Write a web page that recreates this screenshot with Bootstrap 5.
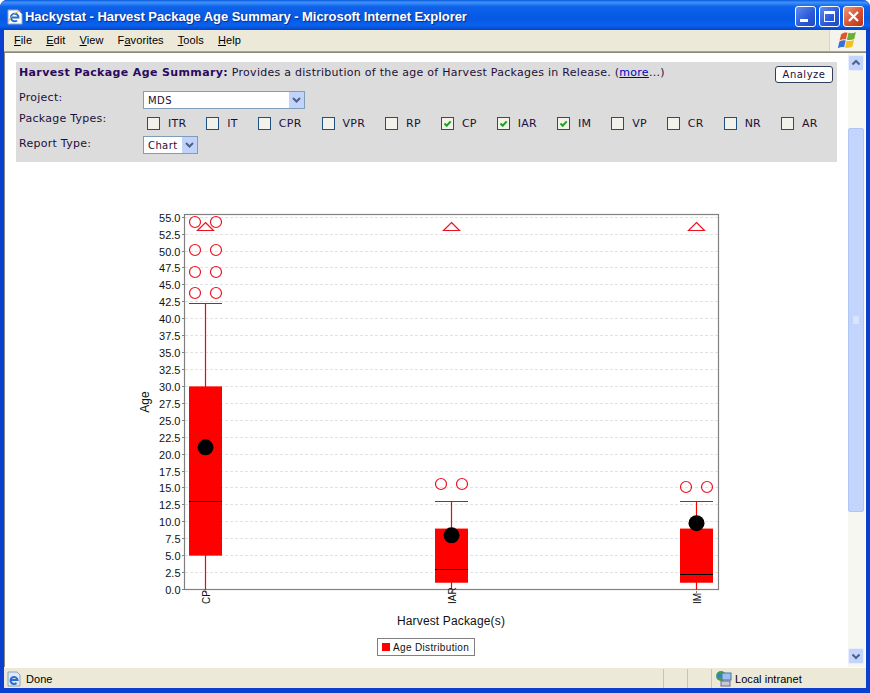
<!DOCTYPE html>
<html lang="en">
<head>
  <meta charset="UTF-8" />
  <title>Hackystat - Harvest Package Age Summary - Microsoft Internet Explorer</title>
  <link href="https://cdn.jsdelivr.net/npm/bootstrap@5.3.0/dist/css/bootstrap.min.css" rel="stylesheet" />
  <script src="https://cdn.jsdelivr.net/npm/bootstrap@5.3.0/dist/js/bootstrap.bundle.min.js"></script>
  <style>
    html, body { height: 100%; margin: 0; background: #fff; overflow: hidden; }
    .xp-window { width: 870px; height: 693px; background: #0a3fd0; border-radius: 7px 7px 0 0; padding: 0 4px 5px 4px; }
    .xp-title {
      height: 30px; margin: 0 -4px; padding: 3px 6px 0 7px; border-radius: 7px 7px 0 0;
      background: linear-gradient(180deg, #0a5be0 0%, #3f92fb 8%, #0f63ea 22%, #0458e4 60%, #0a62ee 85%, #0345c8 100%);
      color: #fff; font: bold 13px "Liberation Sans", sans-serif; text-shadow: 1px 1px 1px #0a2c90;
    }
    .xp-title-text { margin-left: 2px; letter-spacing: -.05px; }
    .xp-wbtn { width: 21px; height: 21px; border: 1px solid #fff; border-radius: 3px; margin-left: 3px; background: linear-gradient(135deg, #5f8df0, #2a58d8 60%, #2049c0); display: block; }
    .xp-wbtn-close { background: linear-gradient(135deg, #ef9a7c, #d8512f 55%, #b8341a); }
    .xp-menu { height: 22px; padding: 0 0 2px 10px; gap: 14px; background: #ece9d8; border-bottom: 1px solid #a9a797; font: 11px "Liberation Sans", sans-serif; letter-spacing: .1px; color: #000; }
    .xp-flag { width: 37px; height: 21px; margin-bottom: -2px; background: #f4f3ec; border-left: 1px solid #d8d5c4; }
    .xp-main { height: 615px; background: #fff; border-top: 1px solid #8a8878; border-left: 1px solid #8a8878; }
    .xp-page { width: 843px; padding: 9px 0 0 11px; }
    .age-panel { width: 821px; height: 100px; padding: 4px 4px 0 3px; background: #dcdcdc; color: #1c1038; font: 11px "DejaVu Sans", Verdana, sans-serif; letter-spacing: .27px; }
    .age-head { height: 25px; }
    .age-head b { color: #2a0a5e; letter-spacing: .37px; }
    .age-head a { color: #0000c0; }
    .age-analyze { width: 58px; height: 17px; padding: 0; background: #fff; border: 1px solid #30405c; border-radius: 3px; font: 10px "DejaVu Sans", sans-serif; letter-spacing: .5px; color: #1c1038; }
    .age-row { display: flex; }
    .age-label { width: 124px; flex: none; }
    .age-label-report { padding-top: 1px; }
    .age-select { height: 18px; padding: 0 0 0 4px; border: 1px solid #7f9db9; border-radius: 0; font: 10px "DejaVu Sans", sans-serif; letter-spacing: .4px; color: #1c1038; background-color: #fff; background-size: 15px 16px; background-position: right 0 center;
      background-image: url("data:image/svg+xml,%3Csvg xmlns='http://www.w3.org/2000/svg' viewBox='0 0 15 16'%3E%3Crect width='15' height='16' fill='%23c1d3fb'/%3E%3Cpath d='M4 6l3.5 3.5L11 6' fill='none' stroke='%234d6185' stroke-width='2'/%3E%3C/svg%3E"); }
    .age-select-project { width: 162px; margin-bottom: 3px; }
    .age-select-report { width: 55px; }
    .age-types { height: 24px; padding-left: 4px; gap: 20px; font-size: 11px; letter-spacing: .25px; }
    .age-types label { display: flex; align-items: center; gap: 8px; margin-top: 4px; height: 14px; }
    .age-check[type=checkbox] { width: 13px; height: 13px; margin: 0; border: 1px solid #1c5180; border-radius: 0; background-color: #f2f2ea; }
    .age-check[type=checkbox]:checked { border-color: #1c5180; background-color: #f2f2ea; background-size: 11px;
      background-image: url("data:image/svg+xml,%3Csvg xmlns='http://www.w3.org/2000/svg' viewBox='0 0 11 11'%3E%3Cpath d='M2.5 5.5l2.2 2.2 4-4.4' fill='none' stroke='%2321a121' stroke-width='2'/%3E%3C/svg%3E"); }
    .age-chart { display: block; margin: 43px 0 0 114px; }
    .age-chart text { font-family: "Liberation Sans", sans-serif; fill: #111; }
    .xp-scroll { width: 17px; background: #f7f7f2; padding: 2px 0 1px 0; }
    .xp-arrow { height: 16px; width: 16px; background: #c3d5fd; border: 1px solid #e8eefc; border-radius: 2px; display: block; }
    .xp-arrow svg, .xp-thumb svg { display: block; }
    .xp-thumb { height: 384px; width: 16px; margin: 57px 0 136px; background: #c3d5fd; border: 1px solid #b0c6f6; border-radius: 2px; }
    .xp-status { height: 21px; padding-top: 1px; background: #ece9d8; font: 11px "Liberation Sans", sans-serif; letter-spacing: .05px; color: #000; border-top: 1px solid #fff; }
    .xp-status-icon { margin-left: 2px; }
    .xp-cell { width: 24px; height: 100%; border-left: 1px solid #c8c5b2; }
    .xp-zone { width: 155px; height: 100%; padding-left: 3px; border-left: 1px solid #c8c5b2; gap: 3px; }
  </style>
</head>
<body>
  <div class="xp-window d-flex flex-column">
    <div class="xp-title d-flex align-items-center">
      <svg width="16" height="17" viewBox="0 0 16 17">
        <path d="M1 2h10l4 4v10H1z" fill="#fff" stroke="#8fa8c8" />
        <path d="M4 9.500h7.500A3.800 3.800 0 1 0 10 12.500" fill="none" stroke="#2a6fd0" stroke-width="2" />
        <path d="M1.500 14c2-6 7-10 12-11" fill="none" stroke="#e8b030" />
      </svg>
      <span class="xp-title-text flex-grow-1">Hackystat - Harvest Package Age Summary - Microsoft Internet Explorer</span>
      <span class="xp-wbtn">
        <svg width="19" height="19"><rect x="4" y="12" width="8" height="3" fill="#fff" /></svg>
      </span>
      <span class="xp-wbtn">
        <svg width="19" height="19"><rect x="4.500" y="4.500" width="10" height="10" fill="none" stroke="#fff" /><rect x="4" y="4" width="11" height="3" fill="#fff" /></svg>
      </span>
      <span class="xp-wbtn xp-wbtn-close">
        <svg width="19" height="19"><path d="M5 5l9 9M14 5l-9 9" stroke="#fff" stroke-width="2.200" /></svg>
      </span>
    </div>

    <div class="xp-menu d-flex align-items-center">
      <span><u>F</u>ile</span>
      <span><u>E</u>dit</span>
      <span><u>V</u>iew</span>
      <span>F<u>a</u>vorites</span>
      <span><u>T</u>ools</span>
      <span><u>H</u>elp</span>
      <span class="xp-flag ms-auto d-flex align-items-center justify-content-center">
        <svg width="21" height="21" viewBox="0 0 20 20">
          <path d="M3 4c2-1.500 4-2 6-1.500L7.500 9C5.500 8.500 3.500 9 1.500 10z" fill="#e0562a" />
          <path d="M10 2.700c2 .5 4.500.8 7-.7l-1.500 6.500c-2.500 1.200-5 1-7 .7z" fill="#69b030" />
          <path d="M1.300 11c2-1 4-1.500 6-1l-1.500 6.500c-2-.5-4 0-6 1z" fill="#3a6fd8" />
          <path d="M8.200 10.200c2 .5 4.500.5 7-.7l-1.500 6.500c-2.500 1.200-5 1.200-7 .7z" fill="#f2c020" />
        </svg>
      </span>
    </div>

    <div class="xp-main d-flex">
      <div class="xp-page">
        <div class="age-panel">
          <div class="age-head d-flex justify-content-between align-items-start">
            <div><b>Harvest Package Age Summary:</b> Provides a distribution of the age of Harvest Packages in Release. (<a href="#">more</a>...)</div>
            <button type="button" class="btn age-analyze">Analyze</button>
          </div>
          <div class="age-row">
            <div class="age-label">Project:</div>
            <select class="form-select age-select age-select-project"><option>MDS</option></select>
          </div>
          <div class="age-row">
            <div class="age-label">Package Types:</div>
            <div class="age-types d-flex">
              <label><input class="form-check-input age-check" type="checkbox" />ITR</label>
              <label><input class="form-check-input age-check" type="checkbox" />IT</label>
              <label><input class="form-check-input age-check" type="checkbox" />CPR</label>
              <label><input class="form-check-input age-check" type="checkbox" />VPR</label>
              <label><input class="form-check-input age-check" type="checkbox" />RP</label>
              <label><input class="form-check-input age-check" type="checkbox" checked />CP</label>
              <label><input class="form-check-input age-check" type="checkbox" checked />IAR</label>
              <label><input class="form-check-input age-check" type="checkbox" checked />IM</label>
              <label><input class="form-check-input age-check" type="checkbox" />VP</label>
              <label><input class="form-check-input age-check" type="checkbox" />CR</label>
              <label><input class="form-check-input age-check" type="checkbox" />NR</label>
              <label><input class="form-check-input age-check" type="checkbox" />AR</label>
            </div>
          </div>
          <div class="age-row">
            <div class="age-label age-label-report">Report Type:</div>
            <select class="form-select age-select age-select-report"><option>Chart</option></select>
          </div>
        </div>

        <svg id="ageChart" class="age-chart" width="600" height="460" viewBox="130 205 600 460"></svg>
      </div>

      <div class="xp-scroll">
        <span class="xp-arrow">
          <svg width="14" height="14"><path d="M3.500 8.500L7 5l3.500 3.500" fill="none" stroke="#4d6185" stroke-width="2" /></svg>
        </span>
        <div class="xp-thumb d-flex align-items-center justify-content-center">
          <svg width="8" height="8"><path d="M1 1h6M1 3h6M1 5h6M1 7h6" stroke="#eef3fe" /></svg>
        </div>
        <span class="xp-arrow">
          <svg width="14" height="14"><path d="M3.500 5.500L7 9l3.500-3.500" fill="none" stroke="#4d6185" stroke-width="2" /></svg>
        </span>
      </div>
    </div>

    <div class="xp-status d-flex align-items-center">
      <svg class="xp-status-icon" width="16" height="16" viewBox="0 0 16 16">
        <path d="M2 1h9l3 3v11H2z" fill="#dfe8f6" stroke="#8fa0b8" />
        <path d="M4.500 9h7A3.500 3.500 0 1 0 10.500 12" fill="none" stroke="#2a6fd0" stroke-width="2" />
      </svg>
      <span class="ms-1 me-auto">Done</span>
      <span class="xp-cell"></span>
      <span class="xp-cell"></span>
      <span class="xp-zone d-flex align-items-center">
        <svg width="17" height="17" viewBox="0 0 17 17">
          <circle cx="6" cy="6" r="5" fill="#3fa24a" />
          <path d="M3 3c2 0 3 1 3 3s-2 2-3 1z" fill="#3a78d8" />
          <rect x="7" y="3" width="9" height="7" fill="#9cc0ee" stroke="#5070a8" />
          <rect x="6" y="11" width="9" height="5" fill="#c8c8d8" stroke="#6a6a8a" />
        </svg>
        Local intranet
      </span>
    </div>
  </div>

  <script>
    // box plot data, in screen pixels of the chart
    const yOf = v => 589.5 - v * 6.77;
    const series = [
      { name: "CP", x: 205.5, q3: 30, q1: 5, med: 13, cap: 42.2, mean: 21, dots: [[195, 222], [216, 222], [195, 250], [216, 250], [195, 272], [216, 272], [195, 293], [216, 293]] },
      { name: "IAR", x: 451.5, q3: 9, q1: 1, med: 3, cap: 13, mean: 8, dots: [[441, 484], [462, 484]] },
      { name: "IM", x: 696.5, q3: 9, q1: 1, med: 2.2, cap: 13, mean: 9.8, dots: [[686, 487], [707, 487]] }
    ];
    let out = "";

    for (let i = 0; i <= 22; i++) {
      const v = i * 2.5;
      const y = Math.floor(yOf(v)) + 0.5;
      if (i > 0) out += `<line x1="185" x2="718" y1="${y}" y2="${y}" stroke="#e2e2e2" stroke-dasharray="3 2" />`;
      out += `<line x1="182" x2="185" y1="${y}" y2="${y}" stroke="#808080" />`;
      out += `<text x="180.500" y="${y + 4.5}" font-size="11" text-anchor="end">${v.toFixed(1)}</text>`;
    }
    out += `<rect x="184.500" y="214.500" width="534" height="375" fill="none" stroke="#808080" stroke-width="1.200" />`;

    series.forEach(s => {
      const left = s.x - 16.5, right = s.x + 16.5;
      const capY = Math.floor(yOf(s.cap)) + 0.5, medY = Math.floor(yOf(s.med)) + 0.5;
      out += `<line x1="${s.x}" x2="${s.x}" y1="${capY}" y2="590" stroke="#ff0000" stroke-width="1.200" />`;
      out += `<line x1="${left}" x2="${right}" y1="${capY}" y2="${capY}" stroke="#ff0000" stroke-width="1.200" />`;
      out += `<rect x="${left}" y="${yOf(s.q3)}" width="33" height="${yOf(s.q1) - yOf(s.q3)}" fill="#ff0000" />`;
      out += `<line x1="${left}" x2="${right}" y1="${medY}" y2="${medY}" stroke="#000" />`;
      out += `<circle cx="${s.x}" cy="${yOf(s.mean)}" r="8" fill="#000" />`;
      out += `<path d="M${s.x} 222.500L${s.x + 8} 230.500H${s.x - 8}Z" fill="#fff" stroke="#ee1122" stroke-width="1.200" />`;
      s.dots.forEach(d => out += `<circle cx="${d[0]}" cy="${d[1]}" r="5.500" fill="none" stroke="#ee1122" stroke-width="1.200" />`);
      out += `<line x1="${s.x}" x2="${s.x}" y1="591" y2="593" stroke="#808080" />`;
      out += `<text transform="translate(${s.x + 4} 604) rotate(-90)" font-size="10">${s.name}</text>`;
    });

    out += `<text transform="translate(149 402) rotate(-90)" font-size="12" text-anchor="middle">Age</text>`;
    out += `<text x="451" y="625" font-size="12" letter-spacing=".15" text-anchor="middle">Harvest Package(s)</text>`;
    out += `<rect x="377.500" y="638.500" width="97" height="17" fill="#fff" stroke="#808080" />`;
    out += `<rect x="382" y="643" width="8" height="8" fill="#ff0000" />`;
    out += `<text x="393" y="650.500" font-size="10" letter-spacing=".35">Age Distribution</text>`;
    document.getElementById("ageChart").innerHTML = out;
  </script>
</body>
</html>
